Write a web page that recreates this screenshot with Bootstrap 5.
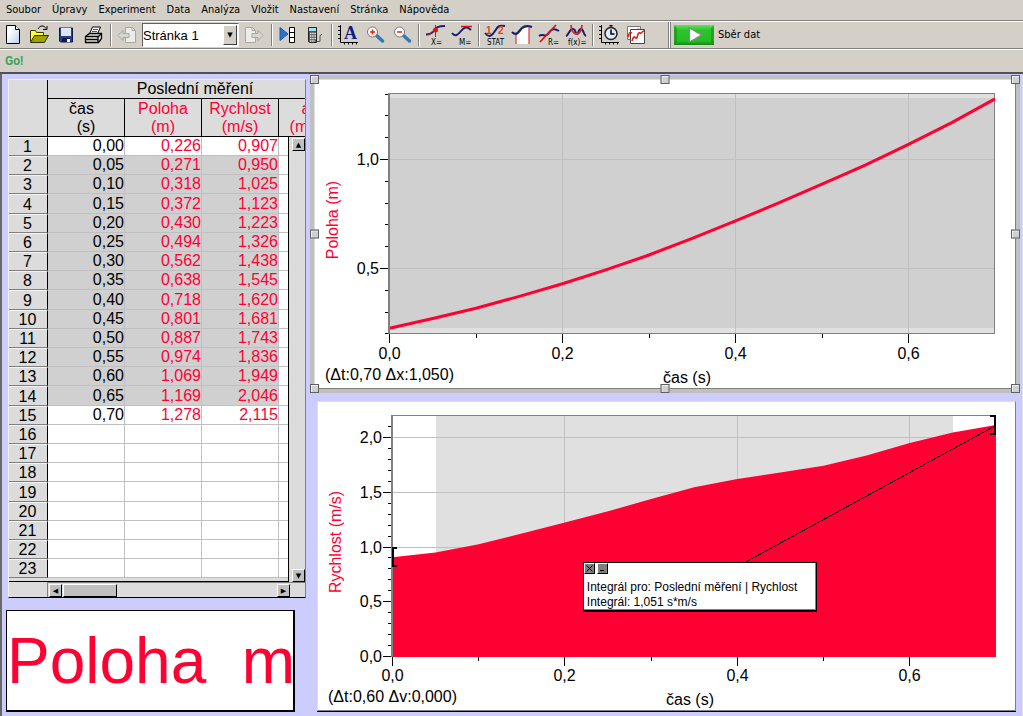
<!DOCTYPE html>
<html lang="cs">
<head>
<meta charset="utf-8">
<meta name="viewport" content="width=device-width, initial-scale=1">
<title>Sběr dat</title>
<link href="https://cdn.jsdelivr.net/npm/bootstrap@5.3.0/dist/css/bootstrap.min.css" rel="stylesheet">
<style>
  :root { --face: #d4d0c8; --red: #ff0033; --grid: #c0c0c0; }
  body { background: var(--face); color: #000; font: 11px/14px "DejaVu Sans Condensed", "Noto Sans", sans-serif; min-height: 100vh; }
  .app-menu { height: 21px; padding: 0 0 1px; border-bottom: 1px solid #808080; }
  .app-menu a { color: #000; padding: 3px 5px 3px 6px; text-decoration: none; }
  .app-tools { border-top: 1px solid #fff; border-bottom: 1px solid #808080; height: 28px; }
  .tool { width: 27px; height: 26px; padding: 0; border: 0; background: none; display: flex; align-items: center; justify-content: center; flex: none; }
  .tool svg { width: 21px; height: 20px; overflow: visible; }
  .tool text { font: 8px "DejaVu Sans Condensed", sans-serif; fill: #000; }
  .tool text.digit { font: bold 10px "Liberation Sans", sans-serif; fill: #e84010; }
  .tool text.letter { font: bold 18px "Liberation Serif", serif; fill: #101c80; }
  .split { width: 2px; height: 22px; margin: 0 2px; border-left: 1px solid #808080; border-right: 1px solid #fff; flex: none; }
  .split.tall { height: 26px; margin: 0 4px 0 18px; box-shadow: 1px 0 #808080; }
  .page-pick { width: 97px; height: 24px; margin: 0 1px; border: 1px solid #fff; border-top-color: #606060; border-left-color: #606060; background: #fff; }
  .page-pick select { width: 100%; height: 22px; padding: 0 16px 0 0; border: 0; background: none; appearance: none; font: 13px "Liberation Sans", sans-serif; color: #000; }
  .page-pick::after { content: "▼"; position: absolute; top: 1px; right: 1px; bottom: 1px; width: 14px; font: 7px/19px "DejaVu Sans", sans-serif; text-align: center; background: var(--face); border: 1px solid #404040; border-top-color: #fff; border-left-color: #fff; pointer-events: none; }
  .collect { border: 0; background: none; padding: 0; gap: 4px; color: #000; }
  .collect svg { width: 40px; height: 20px; }
  .device-bar { height: 25px; border-top: 1px solid #fff; border-bottom: 2px solid #505058; padding: 3px 5px; }
  .device-bar a { color: #3fa45b; font: bold 12px/16px Roboto, sans-serif; text-decoration: none; }
  .workspace { background: #ccccff; border-left: 2px solid #686868; border-right: 1px solid #dedede; padding: 1px 2px 4px 4px; gap: 4px; }
  .side { width: 300px; flex: none; }
  .charts { min-width: 0; }

  .sheet { margin: 4px 0 12px 2px; width: 298px; background: #dcdcdc; border-left: 1px solid #f0f0f0; border-top: 1px solid #f0f0f0; border-right: 1px solid #808080; border-bottom: 1px solid #000; overflow: hidden; font: 16px/18px "Liberation Sans", sans-serif; }
  .sheet-view { overflow: hidden; }
  .sheet table { table-layout: fixed; width: 334px; border-collapse: separate; border-spacing: 0; }
  .sheet th { font-weight: 400; text-align: center; padding: 0; }
  .sheet thead th { border-right: 1px solid #000; border-bottom: 1px solid #000; vertical-align: top; }
  .sheet thead tr:first-child th { height: 19px; line-height: 18px; }
  .sheet thead tr:last-child th { height: 38px; padding-top: 1px; line-height: 18px; }
  .sheet tbody th { height: 19px; border-top: 1px solid #f4f4f4; border-bottom: 1px solid #808080; border-right: 1px solid #000; line-height: 17px; padding-right: 1px; }
  .sheet td { height: 19px; padding: 0; text-align: right; background: #fff; border-right: 1px solid var(--grid); border-bottom: 1px solid var(--grid); }
  .sheet tbody tr:nth-child(5n+4) > * { height: 20px; }
  .sheet .picked td:not(:last-child) { background: #d0d0d0; }
  .sheet .ink-red { color: var(--red); }
  .bar-v { top: 57px; right: 0; bottom: 0; width: 17px; background: #dcdcdc; border-left: 1px solid #000; padding: 1px 0 0 3px; }
  .bar-h { height: 15px; border-top: 1px solid #808080; padding: 1px 15px 0 1px; margin-left: 38px; border-left: 1px solid #808080; }
  .arrow { width: 13px; height: 13px; padding: 0; background: var(--grid); border: 1px solid #000; border-top-color: #fff; border-left-color: #fff; font: 7px/10px "DejaVu Sans", sans-serif; color: #000; text-align: center; flex: none; }
  .thumb { width: 54px; height: 13px; margin-left: 1px; background: var(--grid); border: 1px solid #000; border-top-color: #fff; border-left-color: #fff; }
  .table-end { height: 4px; border-bottom: 1px solid #000; }
  .readout { width: 289px; height: 102px; background: #fff; border: 1px solid #000; border-right-width: 2px; border-bottom-width: 2px; color: var(--red); font: 64px/100px "Liberation Sans", sans-serif; white-space: pre; overflow: hidden; }

  .pane { background: #fff; border: 1px solid #808080; border-top-color: #dedede; border-left-color: #dedede; }
  .pane > svg { display: block; width: 100%; height: auto; }
  .pane svg text { font: 16px "Liberation Sans", sans-serif; fill: #000; }
  .pane svg text.axis-name { fill: var(--red); }
  .chosen { padding: 4px; background: var(--grid); }
  .grip { width: 9px; height: 9px; background: #d0d0d0; border: 1px solid #606060; box-shadow: inset 1px 1px #f0f0f0; }
  .second { margin: 8px 4px 0 7px; box-shadow: 0 1px #000; }
  .note { left: 38%; top: 52%; width: 234px; background: #fff; border: 1px solid #000; border-bottom-width: 2px; box-shadow: inset -1px -1px #808080; padding: 17px 3px 0; font: 12px/15px "Liberation Sans", sans-serif; white-space: nowrap; }
  .note-tools { left: 0; top: 0; gap: 2px; }
  .note-tools button { width: 11px; height: 11px; padding: 0; display: flex; background: #808080; border: 1px solid #000; border-top-color: #fff; border-left-color: #fff; }
  .note-tools svg { width: 9px; height: 9px; }
</style>
</head>
<body class="d-flex flex-column m-0">

<nav class="app-menu d-flex align-items-center" aria-label="Hlavní nabídka">
  <a href="#">Soubor</a><a href="#">Úpravy</a><a href="#">Experiment</a><a href="#">Data</a><a href="#">Analýza</a><a href="#">Vložit</a><a href="#">Nastavení</a><a href="#">Stránka</a><a href="#">Nápověda</a>
</nav>

<div class="app-tools d-flex align-items-center" role="toolbar" aria-label="Nástroje">
  <svg width="0" height="0" class="position-absolute">
    <defs>
      <linearGradient id="paper" x1="0" y1="0" x2="1" y2="1"><stop offset=".3" stop-color="#fff"/><stop offset="1" stop-color="#b8ccf4"/></linearGradient>
      <linearGradient id="green" x1="0" y1="0" x2="0" y2="1"><stop offset="0" stop-color="#62e262"/><stop offset=".25" stop-color="#2cc42c"/><stop offset=".8" stop-color="#28bc28"/><stop offset="1" stop-color="#128612"/></linearGradient>
    </defs>
  </svg>
  <button class="tool" type="button" aria-label="Nový"><svg viewBox="0 0 21 20"><path d="M3.500 .5h9l4 4v14h-13z" fill="url(#paper)" stroke="#000"/><path d="M12.500 .5v4h4" fill="#fff" stroke="#000"/></svg></button>
  <button class="tool" type="button" aria-label="Otevřít"><svg viewBox="0 0 21 20"><path d="M.5 16.500v-11h5l1 2h7v3" fill="#ffff30" stroke="#3a3a00"/><path d="M.5 17.500l4-7h14l-4 7z" fill="#a0a000" stroke="#303000"/><path d="M8 4c2-4 6-4 8-.5M17 1v3.500h-4" fill="none" stroke="#000"/></svg></button>
  <button class="tool" type="button" aria-label="Uložit"><svg viewBox="0 0 21 20"><path d="M2.500 3h13v14h-12l-1-1z" fill="#24408c" stroke="#101850"/><path d="M4 3h10v8h-10z" fill="#dce8f8"/><path d="M5 13h8v4h-8z" fill="#101850"/><path d="M10 14h3v3h-3z" fill="#fff"/></svg></button>
  <button class="tool" type="button" aria-label="Tisk"><svg viewBox="0 0 21 20"><path d="M5.500 9l3-7h8l-3 7z" fill="#fff" stroke="#000"/><path d="M9 4.500h5M8 6.500h5" stroke="#555"/><path d="M1.500 11.500l4-3h12v5l-3 4h-13z" fill="#e4e4e4" stroke="#000" stroke-width="1.300"/><path d="M2 11.500h12v6M14 12l3-3M2 14.500h12" fill="none" stroke="#000" stroke-width="1.300"/><path d="M9 13h3" stroke="#e0d000"/></svg></button>
  <span class="split"></span>
  <button class="tool" type="button" aria-label="Předchozí stránka"><svg viewBox="0 0 21 20"><path d="M8.500 2.500h7l3 3v12h-10z" fill="#ececea" stroke="#a8a6a0"/><path d="M15 2.500v3h3.500" fill="none" stroke="#a8a6a0"/><path d="M1 10.500l5-5v3h6v4h-6v3z" fill="#d8d6d0" stroke="#a8a6a0"/></svg></button>
  <div class="page-pick position-relative flex-shrink-0"><select aria-label="Stránka"><option>Stránka 1</option></select></div>
  <button class="tool" type="button" aria-label="Další stránka"><svg viewBox="0 0 21 20"><path d="M2.500 2.500h7l3 3v12h-10z" fill="#ececea" stroke="#a8a6a0"/><path d="M9 2.500v3h3.500" fill="none" stroke="#a8a6a0"/><path d="M20 10.500l-5-5v3h-6v4h6v3z" fill="#d8d6d0" stroke="#a8a6a0"/></svg></button>
  <span class="split ms-1"></span>
  <button class="tool" type="button" aria-label="Prohlížeč dat"><svg viewBox="0 0 21 20"><path d="M2 2.500v13l8-6.500z" fill="#2c70c8" stroke="#1c58a8"/><path d="M11.500 2.500h5v15h-5zM11.500 7.500h5M11.500 12.500h5" fill="#fff" stroke="#000"/></svg></button>
  <button class="tool" type="button" aria-label="Kalkulačka"><svg viewBox="0 0 21 20"><path d="M3.500 2.500h8v15h-7l-1-1z" fill="#555" stroke="#222"/><path d="M4 3h7v3H4z" fill="#9fe4ec"/><path d="M5 8.500h6M5 11h6M5 13.500h6M5 16h5" stroke="#eee" stroke-width="1.500" stroke-dasharray="1.500 .7"/><path d="M11.500 16.500h3.500v-5q0-2 2-2" fill="none" stroke="#555"/></svg></button>
  <span class="split"></span>
  <button class="tool" type="button" aria-label="Automatické měřítko"><svg viewBox="0 0 21 20"><path d="M2.500 0v17.500H20M0 1.500h3M0 5.500h3M0 9.500h3M0 13.500h3M6.500 17v2.500M10.500 17v2.500M14.500 17v2.500M18.500 17v2.500" fill="none" stroke="#000"/><text class="letter" x="6" y="14">A</text></svg></button>
  <button class="tool" type="button" aria-label="Zvětšit"><svg viewBox="0 0 21 20"><path d="M11.500 10.500l6 5.500" stroke="#3878b8" stroke-width="3.500" stroke-linecap="round"/><circle cx="7.500" cy="7" r="5" fill="#fff" stroke="#777"/><path d="M5 7h5M7.500 4.500v5" stroke="#f02010" stroke-width="1.500"/></svg></button>
  <button class="tool" type="button" aria-label="Zmenšit"><svg viewBox="0 0 21 20"><path d="M11.500 10.500l6 5.500" stroke="#3878b8" stroke-width="3.500" stroke-linecap="round"/><circle cx="7.500" cy="7" r="5" fill="#fff" stroke="#777"/><path d="M5 7h5" stroke="#f02010" stroke-width="1.500"/></svg></button>
  <span class="split"></span>
  <button class="tool" type="button" aria-label="Odečet hodnot"><svg viewBox="0 0 21 20"><path d="M1 9.500c4 0 6-1 8-4s4-4.500 11-4.500" fill="none" stroke="#182070" stroke-width="2"/><path d="M3 10l8-6M10.500 0v12" stroke="#c81818"/><circle cx="10.500" cy="5" r="2.500" fill="#e01010"/><text x="6" y="20">X=</text></svg></button>
  <button class="tool" type="button" aria-label="Tečna"><svg viewBox="0 0 21 20"><path d="M0 8c3 4 6 2 9-2s6-5 10-1" fill="none" stroke="#182070" stroke-width="2"/><path d="M9 1.500h11" stroke="#e01010" stroke-width="1.500"/><text x="7" y="20">M=</text></svg></button>
  <span class="split"></span>
  <button class="tool" type="button" aria-label="Statistika"><svg viewBox="0 0 21 20"><path d="M0 8c4 5 7 3 10-2s4-6 10-5" fill="none" stroke="#182070" stroke-width="2"/><text class="digit" x="1" y="9">1</text><text class="digit" x="13" y="9">2</text><text x="2" y="20">STAT</text></svg></button>
  <button class="tool" type="button" aria-label="Integrál"><svg viewBox="0 0 21 20"><path d="M4 8c4-1 7-6 13-6v17H4z" fill="#fff"/><path d="M4 19V8M17 19V3" stroke="#e01010"/><path d="M0 7c5 5 7-1 10-4s7-2 10-1" fill="none" stroke="#182070" stroke-width="2.300"/></svg></button>
  <button class="tool" type="button" aria-label="Lineární proložení"><svg viewBox="0 0 21 20"><path d="M0 11c4-3 6 2 9-2s5-7 11-3" fill="none" stroke="#182070" stroke-width="2"/><path d="M1 17L17 0" stroke="#e01010" stroke-width="1.800"/><text x="9" y="20">R=</text></svg></button>
  <button class="tool" type="button" aria-label="Proložit křivku"><svg viewBox="0 0 21 20"><path d="M0 11c3-1 3-7 7-7 3 0 2 5 4 5s1-5 4-5 2 6 5 7" fill="none" stroke="#182070" stroke-width="2"/><path d="M5 0c1 12 10 12 11 0" fill="none" stroke="#e02020" stroke-width="1.800"/><text x="2" y="20">f(x)=</text></svg></button>
  <span class="split"></span>
  <button class="tool" type="button" aria-label="Nastavení sběru dat"><svg viewBox="0 0 21 20"><path d="M2.500 0v17.500H20M0 1.500h3M0 5.500h3M0 9.500h3M0 13.500h3M6.500 17v2.500M10.500 17v2.500M14.500 17v2.500M18.500 17v2.500" fill="none" stroke="#000"/><circle cx="12" cy="8.500" r="6" fill="#dcecff" stroke="#222" stroke-width="1.500"/><path d="M12 4.500v4.500h3.500M10.500 .7h3" fill="none" stroke="#000" stroke-width="1.500"/></svg></button>
  <button class="tool" type="button" aria-label="Uložit měření"><svg viewBox="0 0 21 20"><path d="M1.500 1.500h13v13h-13z" fill="#fff" stroke="#777"/><path d="M2 13l3-6 3 1 5-5" fill="none" stroke="#f4a0b0" stroke-width="1.500"/><path d="M4.500 4.500h14v14h-14z" fill="#fff" stroke="#444"/><path d="M2 12c1-5 2-5 4-4" fill="none" stroke="#e82010" stroke-width="1.600"/><path d="M6 16c2-6 2-4 4-3s1-6 4-5 1-2 4-2" fill="none" stroke="#e82010" stroke-width="1.600"/></svg></button>
  <span class="split tall"></span>
  <button class="collect d-flex align-items-center flex-shrink-0" type="button"><svg viewBox="0 0 40 20" aria-hidden="true"><path d="M0 0h40v20H0z" fill="url(#green)"/><path d="M0 20V0l3 3v14zM40 0v20l-3-3V3z" fill="#178a17" opacity=".55"/><path d="M15.500 3v14l12-7z" fill="#fff" stroke="#888" stroke-width="1.200"/></svg><span>Sběr dat</span></button>
</div>

<div class="device-bar d-flex align-items-start"><a href="#">Go!</a></div>

<main class="workspace d-flex flex-grow-1 align-items-start">
  <div class="side">
    <section class="sheet" aria-label="Tabulka dat">
      <div class="sheet-view position-relative">
        <table>
          <colgroup><col style="width:39px"><col style="width:77px"><col style="width:77px"><col style="width:77px"><col></colgroup>
          <thead>
            <tr><th rowspan="2"></th><th colspan="4">Poslední měření</th></tr>
            <tr><th>čas&nbsp;&nbsp;<br>(s)</th><th class="ink-red">Poloha<br>(m)</th><th class="ink-red">Rychlost<br>(m/s)</th><th class="ink-red">a&nbsp;&nbsp;<br>(m/s²)</th></tr>
          </thead>
          <tbody id="rows"></tbody>
        </table>
        <div class="table-end"></div>
        <div class="bar-v position-absolute d-flex flex-column justify-content-between">
          <button class="arrow" type="button" aria-label="Nahoru">▲</button>
          <button class="arrow" type="button" aria-label="Dolů">▼</button>
        </div>
      </div>
      <div class="bar-h d-flex">
        <button class="arrow" type="button" aria-label="Vlevo">◀</button>
        <div class="thumb"></div>
        <button class="arrow ms-auto" type="button" aria-label="Vpravo">▶</button>
      </div>
    </section>
    <div class="readout">Poloha  m</div>
  </div>

  <div class="charts flex-grow-1">
    <section class="chosen position-relative" aria-label="Graf polohy">
      <div class="pane"><svg id="position" viewBox="0 0 700 308"></svg></div>
      <span class="grip position-absolute top-0 start-0"></span>
      <span class="grip position-absolute top-0 start-50 translate-middle-x"></span>
      <span class="grip position-absolute top-0 end-0"></span>
      <span class="grip position-absolute top-50 start-0 translate-middle-y"></span>
      <span class="grip position-absolute top-50 end-0 translate-middle-y"></span>
      <span class="grip position-absolute bottom-0 start-0"></span>
      <span class="grip position-absolute bottom-0 start-50 translate-middle-x"></span>
      <span class="grip position-absolute bottom-0 end-0"></span>
    </section>
    <section class="pane second position-relative" aria-label="Graf rychlosti">
      <svg id="velocity" viewBox="0 0 697 308"></svg>
      <div class="note position-absolute">
        <div class="note-tools position-absolute d-flex">
          <button type="button" aria-label="Zavřít"><svg viewBox="0 0 9 9"><path d="M1.500 1.500l6 6M7.500 1.500l-6 6" stroke="#000"/></svg></button>
          <button type="button" aria-label="Minimalizovat"><svg viewBox="0 0 9 9"><path d="M2 6.500h4" stroke="#000"/></svg></button>
        </div>
        <div>Integrál pro: Poslední měření | Rychlost</div>
        <div>Integrál: 1,051 s*m/s</div>
      </div>
    </section>
  </div>
</main>

<script>
  const position = [.226,.271,.318,.372,.430,.494,.562,.638,.718,.801,.887,.974,1.069,1.169,1.278];
  const velocity = [.907,.950,1.025,1.123,1.223,1.326,1.438,1.545,1.620,1.681,1.743,1.836,1.949,2.046,2.115];
  const fmt = (v, n) => v.toFixed(n).replace('.', ',');

  document.getElementById('rows').innerHTML = Array.from({ length: 23 }, (_, i) => {
    const has = i < position.length;
    return `<tr${i > 0 && i < 14 ? ' class="picked"' : ''}><th scope="row">${i + 1}</th><td>${has ? fmt(i * .05, 2) : ''}</td>` +
      `<td class="ink-red">${has ? fmt(position[i], 3) : ''}</td><td class="ink-red">${has ? fmt(velocity[i], 3) : ''}</td><td></td></tr>`;
  }).join('');

  const line = (x1, y1, x2, y2, c, w = 1) =>
    `<path d="M${x1} ${y1}L${x2} ${y2}" stroke="${c}" stroke-width="${w}" shape-rendering="crispEdges"/>`;
  const rect = (x, y, w, h, c) => `<rect x="${x}" y="${y}" width="${w}" height="${h}" fill="${c}" shape-rendering="crispEdges"/>`;

  function draw(id, o) {
    const X = t => o.x0 + o.kx * t, Y = v => o.y1 + (1 - v) * o.ky;
    const snap = n => Math.floor(n) + .5;
    const L = 74, R = Math.round(X(.7)), T = 13, B = o.bottom;
    let s = o.back(X, L, R, T, B);
    for (const t of [.2, .4, .6]) s += line(snap(X(t)), T, snap(X(t)), B, '#c0c0c0');
    for (const v of o.major) if (v > 0) s += line(L, snap(Y(v)), R, snap(Y(v)), '#c0c0c0');
    s += line(L, T + .5, R, T + .5, '#808080') + line(R - .5, T, R - .5, B, '#808080') + line(L, B + .5, R, B + .5, '#808080');
    const pts = o.data.map((v, i) => `${X(i * .05)} ${Y(v)}`).join('L');
    s += o.fill ? `<path d="M${L} ${B + 1}L${pts}L${R} ${B + 1}z" fill="#ff0033"/>`
                : `<path d="M${pts}" fill="none" stroke="#ff0033" stroke-width="3"/>`;
    s += line(L, T, L, B + 1, '#808080', 2);
    for (let k = Math.round(o.min * 10); k <= Math.round(o.max * 10); k++) {
      const v = k / 10, y = snap(Y(v)), big = o.major.includes(v);
      s += line(big ? L - 9 : L - 4, y, L - 1, y, '#000');
      if (big) s += `<text x="${L - 10}" y="${y + 5.5}" text-anchor="end">${fmt(v, 1)}</text>`;
    }
    for (let k = 0; k < 7; k++) {
      const x = snap(X(k / 10)), big = k % 2 === 0;
      s += line(x, B + 1, x, B + (big ? 10 : 5), '#000');
      if (big) s += `<text x="${x}" y="279" text-anchor="middle">${fmt(k / 10, 1)}</text>`;
    }
    s += `<text x="10" y="300">${o.info}</text><text x="372" y="303" text-anchor="middle">čas (s)</text>`;
    s += `<text class="axis-name" transform="translate(23 140) rotate(-90)" text-anchor="middle">${o.name}</text>`;
    document.getElementById(id).innerHTML = s + (o.front || '');
  }

  draw('position', {
    x0: 74.5, kx: 865, y1: 79.5, ky: 218, bottom: 253, min: .2, max: 1.3, major: [.5, 1], data: position,
    name: 'Poloha (m)', info: '(Δt:0,70 Δx:1,050)',
    back: (X, L, R, T, B) => rect(L, T, R - L, B - T, '#e0e0e0') + rect(L, T + 5, R - L, B - T - 10, '#d0d0d0')
  });
  draw('velocity', {
    x0: 74.5, kx: 862, y1: 145, ky: 109.5, bottom: 254, min: 0, max: 2.1, major: [0, .5, 1, 1.5, 2], data: velocity, fill: true,
    name: 'Rychlost (m/s)', info: '(Δt:0,60 Δv:0,000)',
    back: (X, L, R, T, B) => rect(X(.05), T, X(.65) - X(.05), B - T, '#e0e0e0'),
    front: '<path d="M677 24L426 161" stroke="#000" shape-rendering="crispEdges"/>' +
      '<path d="M79 146H75V164H79M672 14H677V32H672" fill="none" stroke="#000" stroke-width="2" shape-rendering="crispEdges"/>'
  });
</script>
<script src="https://cdn.jsdelivr.net/npm/bootstrap@5.3.0/dist/js/bootstrap.bundle.min.js"></script>
</body>
</html>
